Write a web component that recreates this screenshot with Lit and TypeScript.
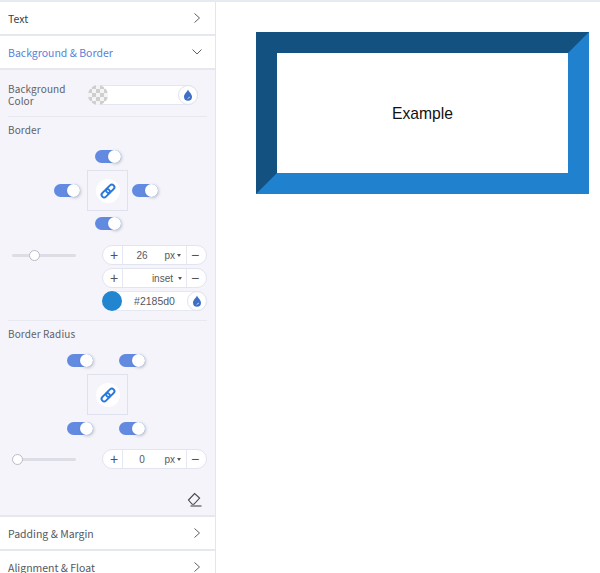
import { LitElement, html, css, svg } from "lit";
import { customElement } from "lit/decorators.js";

const chevR = html`<svg class="chev" width="8" height="12" viewBox="0 0 8 12"><path d="M1.5 1.5 6.5 6 1.5 10.5" fill="none" stroke="#5c5f68" stroke-width="1"/></svg>`;
const chevD = html`<svg class="chev" width="12" height="8" viewBox="0 0 12 8"><path d="M1.5 1.5 6 6 10.5 1.5" fill="none" stroke="#5c5f68" stroke-width="1"/></svg>`;
const drop = html`<svg width="10" height="12" viewBox="0 0 10 12"><path d="M5 .5C5.6 2.6 9 5 9 7.7A4 4 0 0 1 1 7.7C1 5 4.4 2.6 5 .5Z" fill="#3f6fc4"/><path d="M4.6 9.6 6.9 8" stroke="#c9d6f0" stroke-width="1"/></svg>`;
const link = svg`<g fill="none" stroke="#2a78dc" stroke-width="1.9"><rect x="-8" y="-2.6" width="9.6" height="5.2" rx="2.6"/><rect x="-1.6" y="-2.6" width="9.6" height="5.2" rx="2.6"/></g>`;

@customElement("app-root")
export class AppRoot extends LitElement {
  static styles = css`
    :host { display: block; width: 600px; height: 573px; overflow: hidden; background: #fff; font-family: "Noto Sans CJK SC", "Noto Sans", sans-serif; color: #55585f; box-sizing: border-box; border-top: 2px solid #e8eaf2; }
    * { box-sizing: border-box; }
    .page { display: flex; height: 571px; }
    .side { width: 216px; flex: none; border-right: 1px solid #e4e6ee; overflow: hidden; }
    .head { height: 34px; display: flex; align-items: center; justify-content: space-between; padding: 0 14px 0 8px; font-size: 10.5px; border-bottom: 2px solid #e6e8f0; }
    .head.first { color: #3d3f45; }
    .head.open { color: #5b7fd6; padding-right: 12px; }
    .panel { background: #f4f4fa; height: 447px; padding: 0 8px; border-bottom: 2px solid #e6e8f0; display: flex; flex-direction: column; }
    .bgrow { height: 47px; display: flex; align-items: center; padding-top: 4px; border-bottom: 1px solid #e8e9f0; flex: none; }
    .lab { font-size: 10px; line-height: 12px; letter-spacing: .1px; color: #5f6268; }
    .bgrow .lab { width: 80px; }
    .colorin { width: 110px; height: 20px; background: #fff; border-radius: 10px; border: 1px solid #e4e6f0; display: flex; align-items: center; justify-content: space-between; }
    .check { width: 20px; height: 20px; margin: -1px; border-radius: 50%; background: repeating-conic-gradient(#cfcfcf 0 25%, #f4f4f4 0 50%) 0 0 / 8px 8px; }
    .dropb { width: 20px; height: 20px; margin: -1px; border-radius: 50%; background: #fff; border: 1px solid #dfe2ee; display: flex; align-items: center; justify-content: center; }
    .title { margin-top: 7px; height: 12px; flex: none; }
    .t { display: flex; justify-content: center; }
    .tog { width: 26px; height: 13px; border-radius: 7px; background: #618ae0; display: block; position: relative; flex: none; }
    .tog::after { content: ""; position: absolute; right: 0; top: 0; width: 13px; height: 13px; border-radius: 50%; background: #fff; box-shadow: 1px 1px 3px rgba(80,90,120,.35); }
    .box { width: 41px; height: 41px; border: 1px solid #dfe2ee; display: flex; align-items: center; justify-content: center; }
    .circle { width: 24px; height: 24px; border-radius: 50%; background: #fff; display: flex; align-items: center; justify-content: center; }
    .bgrid { display: grid; grid-template-columns: 33px 41px 33px; width: 107px; margin: 7px auto 6px; align-items: center; }
    .bgrid .r { margin-left: 4px; }
    .top1 { margin-top: 14px; }
    .rgrid { display: grid; grid-template-columns: 26px 26px 26px; width: 78px; margin: 0 auto; position: relative; left: -2px; }
    .rtop { margin-top: 14px; }
    .rbox { display: flex; justify-content: center; margin: 7px 0; }
    .ctl { display: flex; align-items: flex-start; justify-content: space-between; padding-left: 4px; margin-top: 15px; flex: none; }
    .ctl.tight { margin-top: 14px; }
    .slider { width: 64px; height: 20px; position: relative; flex: none; }
    .slider::before { content: ""; position: absolute; left: 0; right: 0; top: 9px; height: 3px; border-radius: 2px; background: #dcdde5; }
    .thumb { position: absolute; top: 5px; width: 11px; height: 11px; border-radius: 50%; background: #fff; border: 1px solid #b9bcc6; }
    .stack { display: flex; flex-direction: column; gap: 3px; width: 105px; }
    .step { height: 20px; width: 105px; background: #fff; border: 1px solid #e2e4ef; border-radius: 10px; display: grid; grid-template-columns: 19px 1fr 19px; align-items: center; font-family: "Liberation Sans", Arial, sans-serif; font-size: 10px; color: #55585f; }
    .b { text-align: center; font-size: 14px; line-height: 18px; color: #4f5258; }
    .b.p { padding-left: 3px; }
    .b.m { padding-right: 3px; }
    .mid { height: 18px; border-left: 1px solid #e6e8f1; border-right: 1px solid #e6e8f1; display: flex; align-items: center; position: relative; justify-content: flex-end; padding-right: 5px; gap: 2px; }
    .mid.wide { gap: 5px; padding-right: 4px; }
    .val { position: absolute; left: 9px; width: 20px; text-align: center; }
    .caret { width: 0; height: 0; border-left: 2.5px solid transparent; border-right: 2.5px solid transparent; border-top: 3px solid #55585f; }
    .colstep { height: 20px; background: #fff; border: 1px solid #e6e8f1; border-radius: 10px; display: flex; align-items: center; justify-content: space-between; font-family: "Liberation Sans", Arial, sans-serif; font-size: 10.5px; color: #55585f; }
    .sw { width: 20px; height: 20px; margin: -1px; border-radius: 50%; background: #2185d0; }
    .hr { height: 1px; background: #e8e9f0; margin-top: 9px; flex: none; }
    .eraser { margin-top: auto; margin-bottom: 8px; display: flex; justify-content: flex-end; }
    .eraser svg { margin-right: 4px; }
    .main { flex: 1; padding: 30px 0 0 40px; }
    .ex { width: 333px; height: 162px; border-style: solid; border-width: 21px; border-color: #135280 #2081cf #2081cf #135280; display: flex; align-items: center; justify-content: center; font-family: "Liberation Sans", Arial, sans-serif; font-size: 15.7px; color: #111; background: #fff; padding-top: 1px; }
  `;

  linkBox() {
    return html`<div class="box"><div class="circle"><svg width="18" height="18" viewBox="-9 -9 18 18"><g transform="rotate(-45)">${link}</g></svg></div></div>`;
  }

  stepper(val: string) {
    return html`<div class="step"><span class="b p">+</span><span class="mid"><span class="val">${val}</span><span>px</span><i class="caret"></i></span><span class="b m">−</span></div>`;
  }

  render() {
    return html`<div class="page">
      <aside class="side">
        <div class="head first">Text ${chevR}</div>
        <div class="head open">Background &amp; Border ${chevD}</div>
        <div class="panel">
          <div class="bgrow">
            <div class="lab">Background<br />Color</div>
            <div class="colorin"><span class="check"></span><span class="dropb">${drop}</span></div>
          </div>
          <div class="lab title">Border</div>
          <div class="t top1"><span class="tog"></span></div>
          <div class="bgrid"><span class="tog"></span>${this.linkBox()}<span class="tog r"></span></div>
          <div class="t"><span class="tog"></span></div>
          <div class="ctl">
            <div class="slider"><span class="thumb" style="left:17px"></span></div>
            <div class="stack">
              ${this.stepper("26")}
              <div class="step"><span class="b p">+</span><span class="mid wide"><span>inset</span><i class="caret"></i></span><span class="b m">−</span></div>
              <div class="colstep"><span class="sw"></span><span>#2185d0</span><span class="dropb">${drop}</span></div>
            </div>
          </div>
          <div class="hr"></div>
          <div class="lab title">Border Radius</div>
          <div class="rgrid rtop"><span class="tog"></span><span></span><span class="tog"></span></div>
          <div class="rbox">${this.linkBox()}</div>
          <div class="rgrid"><span class="tog"></span><span></span><span class="tog"></span></div>
          <div class="ctl tight">
            <div class="slider"><span class="thumb" style="left:0"></span></div>
            ${this.stepper("0")}
          </div>
          <div class="eraser"><svg width="16" height="15" viewBox="0 0 16 15"><path d="M1.5 8 7.6 1.6l5 4.4-5.7 6.3H5.2Z" fill="none" stroke="#44474d" stroke-width="1.1"/><path d="M3.5 14H14.5" stroke="#44474d" stroke-width="1.1"/></svg></div>
        </div>
        <div class="head">Padding &amp; Margin ${chevR}</div>
        <div class="head">Alignment &amp; Float ${chevR}</div>
      </aside>
      <main class="main"><div class="ex">Example</div></main>
    </div>`;
  }
}
